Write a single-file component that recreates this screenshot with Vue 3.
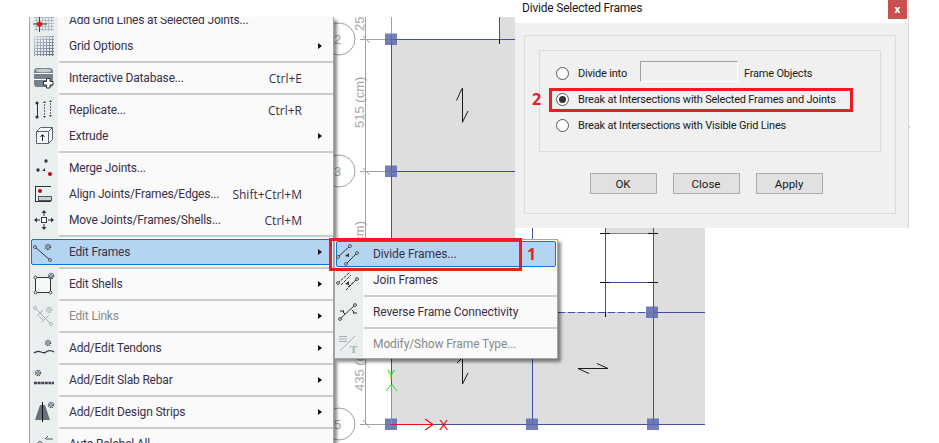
<script setup>
const gear = (x, y, c = '#3f4a55') => `<circle cx="${x}" cy="${y}" r="2.500" fill="none" stroke="${c}" stroke-width="1.500" stroke-dasharray="1.100 .9"/><circle cx="${x}" cy="${y}" r="1.300" fill="#fff" stroke="${c}" stroke-width=".8"/>`
const node = (x, y, c = '#444') => `<circle cx="${x}" cy="${y}" r="1.400" fill="#fff" stroke="${c}" stroke-width="1"/>`

const icons = {
  gridAdd: `<path d="M3 10.500h20M3 13.500h20M3 16.500h20M3 19.500h20M3 22.500h20M5.500 9v15M11.500 9v15M14.500 9v15M17.500 9v15M20.500 9v15" stroke="#b4bac8" fill="none"/><path d="M8.500 8v17M2 17h14" stroke="#444"/><circle cx="8.500" cy="17" r="2.600" fill="#f01010"/>`,
  grid: `<defs><linearGradient id="gridFade" gradientUnits="userSpaceOnUse" x1="3" y1="3" x2="23" y2="23"><stop offset="0" stop-color="#d4d8e0"/><stop offset="1" stop-color="#5c667e"/></linearGradient></defs><path d="M3.500 3v20M6.500 3v20M9.500 3v20M12.500 3v20M15.500 3v20M18.500 3v20M21.500 3v20M3 3.500h20M3 6.500h20M3 9.500h20M3 12.500h20M3 15.500h20M3 18.500h20M3 21.500h20" stroke="url(#gridFade)" fill="none"/>`,
  database: `<rect x="3" y="3" width="19" height="19" rx="3.500" fill="#75818c"/><path d="M3 8.500h19M3 14.500h13" stroke="#fff"/><ellipse cx="12.500" cy="5.500" rx="8" ry="1.800" fill="#c6ccd2"/><path d="M15.500 13.500h3.500v3h3v3.500h-3v3h-3.500v-3h-3v-3.500h3z" fill="#fff" stroke="#333"/>`,
  replicate: `<circle cx="6" cy="6" r="1.600" fill="#333"/><circle cx="6" cy="20" r="1.600" fill="#333"/><path d="M6.500 7v12" stroke="#333"/><path d="M13.500 7v11M19.500 6v11" stroke="#667" stroke-dasharray="2 1"/><path d="M12 6l1.500-2 1.500 2zM18 5l1.500-2 1.500 2zM12 19l1.500 2 1.500-2zM18 18l1.500 2 1.500-2z" fill="#444"/>`,
  extrude: `<path d="M5.500 8.500h12v12h-12zM5.500 8.500l4-4h12v12l-4 4M17.500 8.500l4-4" fill="#f4f6f7" stroke="#5a646c"/><path d="M11.500 18v-6M9.500 14l2-2.500 2 2.500" fill="none" stroke="#223"/>`,
  merge: `<circle cx="15" cy="6" r="1.700" fill="#334"/><circle cx="7" cy="15" r="1.700" fill="#334"/><path d="M11 16l3-3v3z" fill="#334"/><circle cx="19" cy="19" r="2" fill="#c00010"/>`,
  align: `<path d="M4.500 5v16M5 5.500h15M5 20.500h15" stroke="#333" fill="none"/><rect x="7.500" y="15.500" width="13" height="4" fill="#c8d2da" stroke="#555"/><circle cx="9" cy="10" r="2" fill="#c00010"/>`,
  move: `<rect x="10.500" y="10.500" width="5" height="5" fill="#fff" stroke="#334"/><path d="M13 3l2.500 3h-5zM13 23l2.500-3h-5zM3 13l3-2.500v5zM23 13l-3-2.500v5z" fill="#334"/><path d="M13 6v3M13 17v3M6 13h3M17 13h3" stroke="#334"/>`,
  editFrames: `<path d="M4 8l15 13" stroke="#333"/>${node(4, 8)}${node(19, 21)}${gear(17, 8)}`,
  editShells: `<rect x="4.500" y="6.500" width="15" height="15" fill="#f5f8f9" stroke="#333"/>${node(4.5, 6.5)}${node(19.5, 6.5)}${node(4.5, 21.5)}${node(19.5, 21.5)}${gear(20, 5)}`,
  editLinks: `<path d="M4 5l16 16M6 13l6-6M11 19l7-7M8 13l5 5" stroke="#a8aeb2"/>${node(4, 5, '#a8aeb2')}${node(20, 21, '#a8aeb2')}${gear(18, 7, '#a8aeb2')}`,
  tendons: `<path d="M3 18c3-2.500 5-2 7-1s3 1.500 5 0 5-2 8 0" fill="none" stroke="#334" stroke-width="1.300"/>${gear(17, 8)}`,
  slab: `<path d="M3 16h20" stroke="#445" stroke-width="2.500" stroke-dasharray="3 .6"/>${gear(7, 6)}`,
  strips: `<path d="M4 21L9 6h5l5 15z" fill="#66727e"/><path d="M11.500 3v20" stroke="#111"/>${gear(20, 6)}`,
  relabel: `<path d="M4 14l5-4 8 7-4 5z" fill="none" stroke="#556"/><path d="M15 8h7M17 5l-3 3" stroke="#556" fill="none"/>`,
  divide: `<path d="M2 16L14 5M10 23L21 12" stroke="#333" fill="none"/>${node(2, 16)}${node(14, 5)}${node(10, 23)}${node(21, 12)}<path d="M9 15l4-3v4z" fill="#333"/>`,
  join: `<path d="M2 16L14 5M10 23L21 12M5 18L15 8M12 20l8-7" stroke="#333" fill="none" stroke-dasharray="3 1"/>${node(2, 16)}${node(21, 12)}<path d="M9 17l4-3v4z" fill="#333"/>`,
  reverse: `<path d="M4 20L19 6" stroke="#333"/>${node(4, 20)}${node(19, 6)}<path d="M4 12h4l-1 1 2 2M21 14h-4l1-1-2-2" fill="none" stroke="#222"/>`,
  modify: `<path d="M3 5.500h8M3 8h8M3 10.500h8M4 20L19 5" stroke="#a8aeb2" fill="none"/><text x="14" y="22" font-size="11" font-weight="700" font-family="Liberation Serif" fill="#a8aeb2">T</text>`
}

const menuItems = [
  { label: 'Add Grid Lines at Selected Joints...', icon: 'gridAdd' },
  { label: 'Grid Options', icon: 'grid', sub: true },
  { sep: true },
  { label: 'Interactive Database...', icon: 'database', key: 'Ctrl+E' },
  { sep: true },
  { label: 'Replicate...', icon: 'replicate', key: 'Ctrl+R' },
  { label: 'Extrude', icon: 'extrude', sub: true },
  { sep: true },
  { label: 'Merge Joints...', icon: 'merge' },
  { label: 'Align Joints/Frames/Edges...', icon: 'align', key: 'Shift+Ctrl+M' },
  { label: 'Move Joints/Frames/Shells...', icon: 'move', key: 'Ctrl+M' },
  { sep: true },
  { label: 'Edit Frames', icon: 'editFrames', sub: true, active: true },
  { sep: true },
  { label: 'Edit Shells', icon: 'editShells', sub: true },
  { sep: true },
  { label: 'Edit Links', icon: 'editLinks', sub: true, off: true },
  { sep: true },
  { label: 'Add/Edit Tendons', icon: 'tendons', sub: true },
  { sep: true },
  { label: 'Add/Edit Slab Rebar', icon: 'slab', sub: true },
  { sep: true },
  { label: 'Add/Edit Design Strips', icon: 'strips', sub: true },
  { sep: true },
  { label: 'Auto Relabel All', icon: 'relabel' }
]

const subItems = [
  { label: 'Divide Frames...', icon: 'divide', active: true },
  { label: 'Join Frames', icon: 'join' },
  { sep: true },
  { label: 'Reverse Frame Connectivity', icon: 'reverse' },
  { sep: true },
  { label: 'Modify/Show Frame Type...', icon: 'modify', off: true }
]

const radios = [
  { label: 'Divide into', input: true },
  { label: 'Break at Intersections with Selected Frames and Joints', checked: true },
  { label: 'Break at Intersections with Visible Grid Lines' }
]

const joints = [[391, 39], [391, 171], [391, 424], [532, 424], [653, 424], [652, 312]]
const ticks = [[600, 233], [648, 233], [600, 282], [648, 282]]
</script>

<template>
  <div class="screen">
    <!-- model view behind the menus -->
    <svg class="canvas" width="939" height="443" viewBox="0 0 939 443">
      <path d="M391 39H515V240H391zM499 17H515V39H499z" fill="#dedede" />
      <path d="M391 240H532V312H705V424H391z" fill="#dedede" />
      <path d="M653 228H705V312H653zM605 228H653V233H605z" fill="#dedede" />

      <g fill="none" stroke="#a0a0a0">
        <path d="M365.500 17V424M360 39.500H391M360 171.500H391M360 424.500H391M391.500 17V39" />
        <path d="M363 36l7 7M363 168l7 7M363 420l7 8" />
        <circle cx="339" cy="39" r="16" />
        <circle cx="339" cy="171" r="16" />
        <circle cx="339" cy="424" r="16" />
      </g>
      <g class="dim">
        <text x="334" y="44">2</text>
        <text x="334" y="176">3</text>
        <text x="334" y="429">5</text>
        <text transform="translate(364 31) rotate(-90)">25</text>
        <text transform="translate(364 128) rotate(-90)">515 (cm)</text>
        <text transform="translate(364 247) rotate(-90)">(cm)</text>
        <text transform="translate(364 391) rotate(-90)">435 (cm)</text>
      </g>

      <g fill="none" stroke="#3f51a3" stroke-width="1">
        <path d="M391.500 39V424M499.500 17V43M391 39.500H515M391 171.500H515" />
        <path d="M532.500 228V424M605.500 228V312M653.500 228V424M605 282.500H653M653 312.500H705M391 424.500H705" />
        <path d="M558 312.500H648" stroke="#b4bce0" />
        <path d="M558 312.500H648" stroke-dasharray="7 3" />
      </g>
      <path d="M605 233.500H653" stroke="#808080" />
      <path d="M499.500 39V44" stroke="#111" />
      <path v-for="t in ticks" :key="t.join()" :d="`M${t[0]} ${t[1] + 0.5}h10`" stroke="#111" />
      <path d="M605.500 312V317" stroke="#111" />
      <rect v-for="j in joints" :key="j.join()" :x="j[0] - 6" :y="j[1] - 5.500" width="12" height="11.500" fill="#5a68ad" opacity=".85" />

      <g fill="none" stroke="#1c1c1c" stroke-width="1">
        <path d="M462.500 88V122.500M462 88.500L456.500 100.500M462.500 122L468 111" />
        <path d="M462.500 358V384M462.500 384L468 373M462 358L457 363" />
        <path d="M578 368.500H608M578 368.500L589 373.500M608 368.500L597 363.500" />
      </g>

      <path d="M391.500 424V385M386 391L391.500 384L397 391" fill="none" stroke="#20e020" />
      <text class="axis axis-y" x="387" y="379" fill="#20e020">Y</text>
      <path d="M391 424.500H432M425 419L433 424.500L425 430" fill="none" stroke="#f01010" stroke-width="1.200" />
      <text class="axis" x="439" y="430" fill="#f01010">X</text>
      <path d="M908.500 127h1" stroke="#3f51a3" />
    </svg>

    <!-- main context menu -->
    <div class="menu main-menu">
      <div class="menu-list">
        <template v-for="(item, i) in menuItems" :key="i">
          <div v-if="item.sep" class="sep"></div>
          <div v-else class="row" :class="{ active: item.active, off: item.off }">
            <svg class="ico" width="26" height="26" viewBox="0 0 26 26" v-html="icons[item.icon]"></svg>
            <span class="label">{{ item.label }}</span>
            <span class="key">{{ item.key }}</span>
            <span class="arrow" :class="{ show: item.sub }"></span>
          </div>
        </template>
      </div>
    </div>

    <!-- submenu -->
    <div class="menu sub-menu">
      <template v-for="(item, i) in subItems" :key="i">
        <div v-if="item.sep" class="sep"></div>
        <div v-else class="row" :class="{ active: item.active, off: item.off }">
          <svg class="ico" width="26" height="26" viewBox="0 0 26 26" v-html="icons[item.icon]"></svg>
          <span class="label">{{ item.label }}</span>
        </div>
      </template>
    </div>

    <!-- dialog -->
    <section class="dialog">
      <header class="title-bar">
        <span class="title">Divide Selected Frames</span>
        <button class="close">x</button>
      </header>
      <div class="dialog-body">
        <div class="group">
          <div class="inner-group">
            <label v-for="r in radios" :key="r.label" class="radio-row">
              <span class="radio" :class="{ checked: r.checked }"></span>
              <span :class="{ 'short-label': r.input }">{{ r.label }}</span>
              <template v-if="r.input">
                <span class="num-input"></span>
                <span>Frame Objects</span>
              </template>
            </label>
          </div>
          <div class="buttons">
            <button class="btn">OK</button>
            <button class="btn">Close</button>
            <button class="btn">Apply</button>
          </div>
        </div>
      </div>
    </section>

    <!-- red annotations -->
    <div class="mark mark-frames"></div>
    <div class="mark mark-option"></div>
    <span class="step step-1">1</span>
    <span class="step step-2">2</span>
  </div>
</template>

<style scoped>
.screen {
  position: relative;
  width: 939px;
  height: 443px;
  overflow: hidden;
  background: #fff;
  font-family: Roboto, "Noto Sans", sans-serif;
}

.canvas {
  position: absolute;
  left: 0;
  top: 0;
}

.dim text {
  font: 13px "Liberation Sans", sans-serif;
  fill: #a8a8a8;
}

.axis {
  font: 14px "Liberation Sans", sans-serif;
}

.axis-y {
  font-size: 12px;
}

.menu {
  position: absolute;
  box-sizing: border-box;
  background: #fafafa;
  border: 1px solid #a0a6aa;
  font-size: 12px;
  color: #3a3048;
  box-shadow: 3px 3px 3px rgba(0, 0, 0, 0.45);
}

.main-menu {
  left: 29px;
  top: 17px;
  width: 305px;
  height: 440px;
  border-top: 0;
  overflow: hidden;
}

.menu-list {
  margin-top: -10px;
  background: linear-gradient(90deg, #e9eeef 28px, transparent 28px);
}

.sub-menu {
  left: 334px;
  top: 239px;
  width: 224px;
  height: 120px;
  padding-top: 1px;
  background: linear-gradient(90deg, #e9eeef 28px, #fafafa 28px);
}

.row {
  position: relative;
  z-index: 0;
  box-sizing: border-box;
  display: flex;
  align-items: center;
  height: 26px;
}

.row.active::before {
  content: "";
  position: absolute;
  z-index: -1;
  inset: 0 1px;
  box-sizing: border-box;
  background: #b3d5f2;
  border: 1px solid #0a78d6;
  border-radius: 2px;
}

.row.off {
  color: #8a8a8a;
}

.ico {
  flex: none;
  margin-left: 1px;
}

.label {
  margin-left: 12px;
  letter-spacing: -0.18px;
  white-space: nowrap;
}

.sub-menu .label {
  margin-left: 11px;
  letter-spacing: -0.1px;
}

.key {
  margin-left: auto;
  padding-right: 31px;
  white-space: nowrap;
  font-family: "Open Sans", sans-serif;
}

.arrow {
  position: absolute;
  right: 11px;
  top: 10px;
  width: 0;
  height: 0;
  border-left: 4px solid transparent;
  border-top: 3.500px solid transparent;
  border-bottom: 3.500px solid transparent;
}

.arrow.show {
  border-left-color: #111;
}

.sep {
  height: 6px;
  box-sizing: border-box;
  margin-left: 29px;
  padding-top: 2px;
}

.sep::before {
  content: "";
  display: block;
  height: 2px;
  background: #cbcbcb;
}

.dialog {
  position: absolute;
  left: 515px;
  top: 0;
  width: 394px;
  height: 228px;
  display: flex;
  flex-direction: column;
  background: #f0f0f0;
  border-right: 1px solid #d8d8d8;
  box-sizing: border-box;
  font-size: 11px;
  letter-spacing: -0.2px;
  color: #1a1a1a;
}

.title-bar {
  height: 23px;
  flex: none;
  display: flex;
  justify-content: space-between;
  background: #fff;
  padding-left: 7px;
}

.title {
  line-height: 16px;
  font-size: 12px;
}

.close {
  width: 19px;
  height: 19px;
  margin-right: 1px;
  padding: 0;
  border: 0;
  background: #c75050;
  color: #fff;
  font: 700 10px/17px "Open Sans", sans-serif;
}

.dialog-body {
  padding: 12px 12px 14px 9px;
  flex: 1;
  display: flex;
}

.group {
  flex: 1;
  box-sizing: border-box;
  border: 1px solid #dcdcdc;
  padding: 14px;
}

.inner-group {
  box-sizing: border-box;
  height: 102px;
  border: 1px solid #dcdcdc;
  padding: 9px 0 0 16px;
  display: flex;
  flex-direction: column;
}

.radio-row {
  display: flex;
  align-items: center;
  height: 26px;
  white-space: nowrap;
}

.radio {
  flex: none;
  width: 13px;
  height: 13px;
  box-sizing: border-box;
  margin-right: 9px;
  border: 1px solid #555;
  border-radius: 50%;
  background: #fff;
  display: flex;
  align-items: center;
  justify-content: center;
}

.radio.checked::after {
  content: "";
  width: 7px;
  height: 7px;
  border-radius: 50%;
  background: #333;
}

.short-label {
  width: 62px;
}

.num-input {
  width: 98px;
  height: 21px;
  box-sizing: border-box;
  margin: 0 6px 4px 0;
  background: #f0f0f0;
  border: 1px solid #fff;
  border-top-color: #a0a0a0;
  border-left-color: #a0a0a0;
}

.buttons {
  display: flex;
  justify-content: center;
  gap: 16px;
  margin-top: 21px;
  padding-right: 8px;
}

.btn {
  width: 67px;
  height: 21px;
  padding: 0;
  box-sizing: border-box;
  border: 1px solid #adadad;
  background: #e1e1e1;
  color: #1a1a1a;
  font: 11.500px Roboto, sans-serif;
}

.mark {
  position: absolute;
  box-sizing: border-box;
  border: 3px solid #ed1c24;
}

.mark-frames {
  left: 329px;
  top: 238px;
  width: 193px;
  height: 33px;
}

.mark-option {
  left: 549px;
  top: 88px;
  width: 304px;
  height: 24px;
}

.step {
  position: absolute;
  color: #ed1c24;
  font: 700 16px/20px "Open Sans", sans-serif;
}

.step-1 {
  left: 527px;
  top: 244px;
}

.step-2 {
  left: 532px;
  top: 89px;
}
</style>
